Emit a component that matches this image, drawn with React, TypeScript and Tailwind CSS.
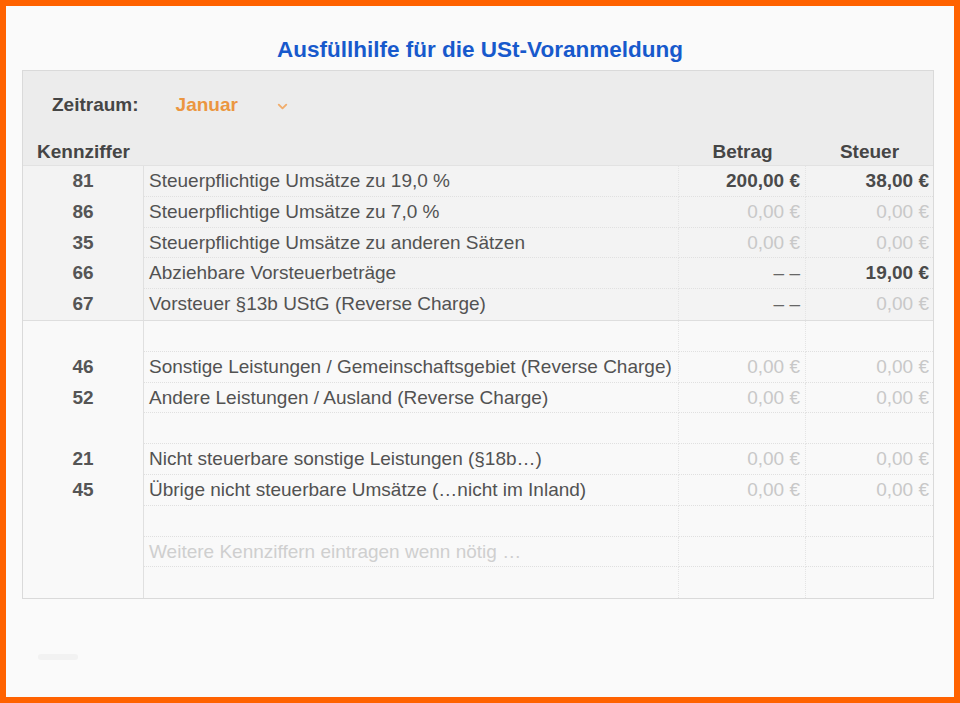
import React from 'react';
import { ChevronDown } from 'lucide-react';

type Row = { nr?: string; label?: string; betrag?: string; steuer?: string; placeholder?: boolean };

const top: Row[] = [
  { nr: '81', label: 'Steuerpflichtige Umsätze zu 19,0 %', betrag: '200,00 €', steuer: '38,00 €' },
  { nr: '86', label: 'Steuerpflichtige Umsätze zu 7,0 %', betrag: '0,00 €', steuer: '0,00 €' },
  { nr: '35', label: 'Steuerpflichtige Umsätze zu anderen Sätzen', betrag: '0,00 €', steuer: '0,00 €' },
  { nr: '66', label: 'Abziehbare Vorsteuerbeträge', betrag: '– –', steuer: '19,00 €' },
  { nr: '67', label: 'Vorsteuer §13b UStG (Reverse Charge)', betrag: '– –', steuer: '0,00 €' },
];

const bottom: Row[] = [
  {},
  { nr: '46', label: 'Sonstige Leistungen / Gemeinschaftsgebiet (Reverse Charge)', betrag: '0,00 €', steuer: '0,00 €' },
  { nr: '52', label: 'Andere Leistungen / Ausland (Reverse Charge)', betrag: '0,00 €', steuer: '0,00 €' },
  {},
  { nr: '21', label: 'Nicht steuerbare sonstige Leistungen (§18b…)', betrag: '0,00 €', steuer: '0,00 €' },
  { nr: '45', label: 'Übrige nicht steuerbare Umsätze (…nicht im Inland)', betrag: '0,00 €', steuer: '0,00 €' },
  {},
  { label: 'Weitere Kennziffern eintragen wenn nötig …', placeholder: true },
  {},
];

function Value({ v }: { v?: string }) {
  if (!v) return null;
  if (v === '– –') return <span className="text-[#666]">{v}</span>;
  if (v.startsWith('0,00')) return <span className="text-[#c8c8c8]">{v}</span>;
  return <span className="font-bold text-[#4a4a4a]">{v}</span>;
}

function TableRow({ row, last }: { row: Row; last: boolean }) {
  const line = last ? '' : 'border-b border-dotted border-[#e0e0e0]';
  return (
    <div className="flex h-[30.8px] text-[19px] leading-[30px]">
      <div className="w-[121px] shrink-0 border-r border-[#e0e0e0] text-center font-bold text-[#555]">{row.nr}</div>
      <div className={`w-[535px] shrink-0 pl-[5px] whitespace-nowrap border-r border-dotted border-r-[#e4e4e4] ${line} ${row.placeholder ? 'text-[#cfcfcf]' : 'text-[#525252]'}`}>
        {row.label}
      </div>
      <div className={`w-[127px] shrink-0 pr-[5px] text-right border-r border-dotted border-r-[#e4e4e4] ${line}`}>
        <Value v={row.betrag} />
      </div>
      <div className={`flex-1 pr-[4px] text-right ${line}`}>
        <Value v={row.steuer} />
      </div>
    </div>
  );
}

export default function App() {
  return (
    <div className="h-[703px] w-[960px] border-[6px] border-[#ff6200] bg-[#fafafa] font-['Liberation_Sans',Arial,sans-serif]">
      <div className="h-[64px] pt-[29px] text-center text-[22.5px] font-bold leading-[30px] text-[#1759cc]">
        Ausfüllhilfe für die USt-Voranmeldung
      </div>

      <div className="ml-[16px] w-[912px] border border-[#dadada]">
        <div className="h-[95px] pt-[21px] bg-[#ececec] border-b border-[#e2e2e2]">
          <div className="flex h-[26px] items-center text-[19px] font-bold">
            <span className="ml-[29px] text-[#454545]">Zeitraum:</span>
            <span className="ml-[37px] text-[#eb9640]">Januar</span>
            <ChevronDown size={15} strokeWidth={3} className="ml-[37px] mt-[2px] text-[#f1ad6c]" />
          </div>
          <div className="flex h-[26px] mt-[21px] items-center text-[19px] font-bold text-[#454545]">
            <span className="w-[656px] pl-[14px]">Kennziffer</span>
            <span className="w-[127px] text-center">Betrag</span>
            <span className="flex-1 text-center">Steuer</span>
          </div>
        </div>

        <div className="bg-[#f3f3f3] border-b border-[#dedede]">
          {top.map((r, i) => (
            <TableRow key={i} row={r} last={i === top.length - 1} />
          ))}
        </div>

        <div className="bg-[#f9f9f9]">
          {bottom.map((r, i) => (
            <TableRow key={i} row={r} last={i === bottom.length - 1} />
          ))}
        </div>
      </div>

      <div className="ml-[32px] mt-[55px] h-[6px] w-[40px] rounded-full bg-[#f2f2f2]" />
    </div>
  );
}
